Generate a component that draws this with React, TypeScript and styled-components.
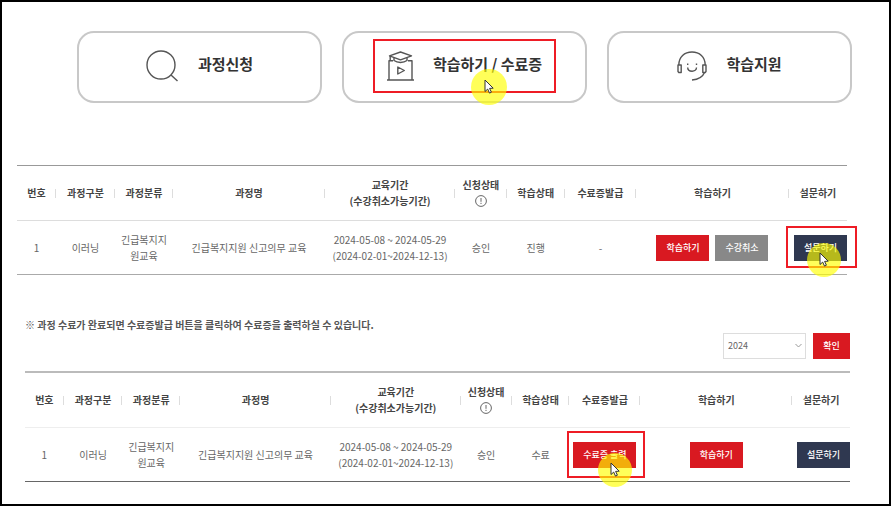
import React, { useState } from "react";
import styled, { createGlobalStyle } from "styled-components";

const GlobalStyle = createGlobalStyle`
  *, *::before, *::after { box-sizing: border-box; }
  body {
    margin: 0;
    background: #fff;
    color: #666;
    font-family: "Noto Sans CJK KR", "Noto Sans", sans-serif;
    font-size: 10px;
    line-height: 16px;
  }
  button, select { font: inherit; margin: 0; }
`;

const Page = styled.main`
  min-height: 100vh;
  padding: 29px 0 22px;
  border: 2px solid #000;
`;

const CardNav = styled.nav`
  display: grid;
  grid-template-columns: repeat(3, 1fr);
  gap: 20px;
  margin: 0 37px 0 75px;
`;

const Card = styled.a`
  display: flex;
  align-items: center;
  justify-content: center;
  height: 72px;
  padding-bottom: 3px;
  border: 2px solid #c8c8c8;
  border-radius: 17px;
  color: #333;
  text-decoration: none;
`;

const CardBody = styled.span`
  position: relative;
  display: flex;
  align-items: center;
  gap: 19px;
`;

const CardTitle = styled.span`
  padding-bottom: 4px;
  font-size: 15px;
  line-height: 24px;
  font-weight: 700;
  white-space: nowrap;
`;

const LineIcon = styled.svg`
  display: block;
  flex: none;
  fill: none;
  stroke: #555;
  stroke-width: 1.4;
`;

const Frame = styled.span<{ $inset: string }>`
  position: absolute;
  inset: ${(p) => p.$inset};
  border: 2px solid #ee1c25;
  pointer-events: none;
`;

const Pointer = styled.span<{ $left: string; $top: string; $size: number }>`
  position: absolute;
  left: ${(p) => p.$left};
  top: ${(p) => p.$top};
  display: grid;
  place-items: center;
  width: ${(p) => p.$size}px;
  height: ${(p) => p.$size}px;
  border-radius: 50%;
  background: rgba(255, 255, 0, 0.65);
  pointer-events: none;
`;

const Section = styled.section<{ $margin: string }>`
  margin: ${(p) => p.$margin};
`;

const Notice = styled.p`
  margin: 0;
  color: #555;
  font-weight: 700;
`;

const FilterBar = styled.form`
  display: flex;
  justify-content: flex-end;
  gap: 7px;
  margin-bottom: 12px;
`;

const SelectWrap = styled.label`
  position: relative;
  display: block;
  width: 83px;
`;

const YearSelect = styled.select`
  appearance: none;
  width: 100%;
  height: 26px;
  padding: 0 20px 0 4px;
  border: 1px solid #ddd;
  border-radius: 0;
  background: #fff;
  color: #666;
  font-size: 9px;
`;

const Chevron = styled.svg`
  position: absolute;
  right: 4px;
  top: 10px;
  fill: none;
  stroke: #999;
  pointer-events: none;
`;

const tones = { red: "#d91921", gray: "#888", navy: "#2f3850" };

const Button = styled.button<{ $tone: keyof typeof tones; $width: number }>`
  width: ${(p) => p.$width}px;
  height: 26px;
  padding: 0;
  border: 0;
  background: ${(p) => tones[p.$tone]};
  color: #fff;
  font-size: 9px;
  font-weight: 500;
  white-space: nowrap;
`;

const Marked = styled.span`
  position: relative;
  display: inline-block;
`;

const Actions = styled.div<{ $end?: boolean }>`
  display: flex;
  justify-content: ${(p) => (p.$end ? "flex-end" : "center")};
  gap: 6px;
`;

const Table = styled.table<{ $top: string; $middle: string; $bottom: string }>`
  width: 100%;
  table-layout: fixed;
  border-spacing: 0;
  border-top: ${(p) => p.$top};
  border-bottom: ${(p) => p.$bottom};

  th { border-bottom: 1px solid ${(p) => p.$middle}; }
`;

const Head = styled.th`
  height: 55px;
  padding: 0;
  color: #444;
  font-weight: 700;
  white-space: nowrap;
  background: linear-gradient(#ddd, #ddd) right center / 1px 9px no-repeat;

  &:last-child { background: none; }
`;

const Cell = styled.td`
  height: 53px;
  padding: 0;
  text-align: center;
`;

const CategoryText = styled.div`
  padding: 0 4px;
`;

const InfoButton = styled.button`
  display: block;
  width: 12px;
  height: 16px;
  margin: 0 auto;
  padding: 2px 0;
  border: 0;
  background: none;
`;

const PointerArrow = () => (
  <svg width="10" height="15" viewBox="0 0 10 15" aria-hidden="true">
    <path
      d="M1 1v11.5l2.7-2.4 1.8 4 1.9-.9-1.8-3.8 3.6-.2z"
      fill="#fff"
      stroke="#333"
      strokeWidth="1"
      strokeLinejoin="round"
    />
  </svg>
);

const SearchIcon = () => (
  <LineIcon width="33" height="32" viewBox="0 0 33 32" aria-hidden="true">
    <circle cx="15" cy="15" r="14" />
    <path d="M25 25l6.500 6" />
  </LineIcon>
);

const LectureIcon = () => (
  <LineIcon width="27" height="30" viewBox="0 0 27 30" aria-hidden="true" strokeLinejoin="round">
    <path d="M13.500 1L24.500 4.800L13.500 8.800L2.500 4.800z" />
    <path d="M7 6.800v2.700c3.500 2.600 9.500 2.600 13 0V6.800M3.200 5v4.500" />
    <path d="M6 9.800H2V29M21 9.800h4V29M0 29h27" />
    <path d="M10.800 16v7l6.500-3.500z" />
  </LineIcon>
);

const SupportIcon = () => (
  <LineIcon width="30" height="30" viewBox="0 0 30 30" aria-hidden="true" strokeLinejoin="round">
    <path d="M1.800 14C1.800 6 7.500 1 15 1s13.200 5 13.200 13" />
    <path d="M1 14h3.200v7.500H1.800L1 20.500zM29 14h-3.200v7.500h2.400L29 20.500z" />
    <path d="M27.500 21.500c-1.800 4.500-6 7-12.500 7.500" />
    <path d="M10.700 16.500c0 5 8.800 5 8.800 0M10.700 12.500v1.600M19.500 12.500v1.600" />
  </LineIcon>
);

const InfoIcon = () => (
  <svg width="12" height="12" viewBox="0 0 12 12" fill="none" stroke="#666" display="block" aria-hidden="true">
    <circle cx="6" cy="6" r="5.400" />
    <path d="M6 3v3.800M6 7.800v1.200" />
  </svg>
);

const columnWidths = ["4.7%", "7.1%", "7%", "18.3%", "15.7%", "6.2%", "7%", "8.6%", "18.4%", "7%"];

type CourseTableProps = {
  label: string;
  top: string;
  middle: string;
  bottom: string;
  status: string;
  certificate: React.ReactNode;
  study: React.ReactNode;
  survey: React.ReactNode;
};

const CourseTable = (p: CourseTableProps) => (
  <Table aria-label={p.label} $top={p.top} $middle={p.middle} $bottom={p.bottom}>
    <colgroup>
      {columnWidths.map((width, i) => (
        <col key={i} width={width} />
      ))}
    </colgroup>
    <thead>
      <tr>
        <Head scope="col">번호</Head>
        <Head scope="col">과정구분</Head>
        <Head scope="col">과정분류</Head>
        <Head scope="col">과정명</Head>
        <Head scope="col">
          교육기간
          <br />
          (수강취소가능기간)
        </Head>
        <Head scope="col">
          신청상태
          <InfoButton type="button" aria-label="신청상태 안내">
            <InfoIcon />
          </InfoButton>
        </Head>
        <Head scope="col">학습상태</Head>
        <Head scope="col">수료증발급</Head>
        <Head scope="col">학습하기</Head>
        <Head scope="col">설문하기</Head>
      </tr>
    </thead>
    <tbody>
      <tr>
        <Cell>1</Cell>
        <Cell>이러닝</Cell>
        <Cell>
          <CategoryText>긴급복지지원교육</CategoryText>
        </Cell>
        <Cell>긴급복지지원 신고의무 교육</Cell>
        <Cell>
          2024-05-08 ~ 2024-05-29
          <br />
          (2024-02-01~2024-12-13)
        </Cell>
        <Cell>승인</Cell>
        <Cell>{p.status}</Cell>
        <Cell>{p.certificate}</Cell>
        <Cell>
          <Actions>{p.study}</Actions>
        </Cell>
        <Cell>
          <Actions $end>{p.survey}</Actions>
        </Cell>
      </tr>
    </tbody>
  </Table>
);

export default function App() {
  const [year, setYear] = useState("2024");

  return (
    <>
      <GlobalStyle />
      <Page>
        <CardNav aria-label="주요 메뉴">
          <Card href="#apply">
            <CardBody>
              <SearchIcon />
              <CardTitle>과정신청</CardTitle>
            </CardBody>
          </Card>
          <Card href="#study">
            <CardBody>
              <LectureIcon />
              <CardTitle>학습하기 / 수료증</CardTitle>
              <Frame $inset="-12px -14px -12px -14px" />
              <Pointer $left="84px" $top="18px" $size={36}>
                <PointerArrow />
              </Pointer>
            </CardBody>
          </Card>
          <Card href="#support">
            <CardBody>
              <SupportIcon />
              <CardTitle>학습지원</CardTitle>
            </CardBody>
          </Card>
        </CardNav>

        <Section $margin="62px 42px 0 15px">
          <CourseTable
            label="학습중인 과정"
            top="1px solid #999"
            middle="#ddd"
            bottom="1px solid #aaa"
            status="진행"
            certificate="-"
            study={
              <>
                <Button type="button" $tone="red" $width={53}>학습하기</Button>
                <Button type="button" $tone="gray" $width={53}>수강취소</Button>
              </>
            }
            survey={
              <Marked>
                <Button type="button" $tone="navy" $width={53}>설문하기</Button>
                <Frame $inset="-9px -10px -7px -8px" />
                <Pointer $left="13px" $top="8px" $size={34}>
                  <PointerArrow />
                </Pointer>
              </Marked>
            }
          />
        </Section>

        <Section $margin="42px 39px 0 23px">
          <Notice>※ 과정 수료가 완료되면 수료증발급 버튼을 클릭하여 수료증을 출력하실 수 있습니다.</Notice>
          <FilterBar onSubmit={(e) => e.preventDefault()}>
            <SelectWrap>
              <YearSelect aria-label="연도" value={year} onChange={(e) => setYear(e.target.value)}>
                <option>2024</option>
                <option>2023</option>
              </YearSelect>
              <Chevron width="7" height="5" viewBox="0 0 7 5" aria-hidden="true">
                <path d="M.5 1l3 3 3-3" />
              </Chevron>
            </SelectWrap>
            <Button type="submit" $tone="red" $width={37}>확인</Button>
          </FilterBar>
          <CourseTable
            label="수료한 과정"
            top="2px solid #bbb"
            middle="#eee"
            bottom="1px solid #666"
            status="수료"
            certificate={
              <Marked>
                <Button type="button" $tone="red" $width={63}>수료증 출력</Button>
                <Frame $inset="-11px -9px -10px -6px" />
                <Pointer $left="25px" $top="11px" $size={34}>
                  <PointerArrow />
                </Pointer>
              </Marked>
            }
            study={<Button type="button" $tone="red" $width={53}>학습하기</Button>}
            survey={<Button type="button" $tone="navy" $width={53}>설문하기</Button>}
          />
        </Section>
      </Page>
    </>
  );
}
